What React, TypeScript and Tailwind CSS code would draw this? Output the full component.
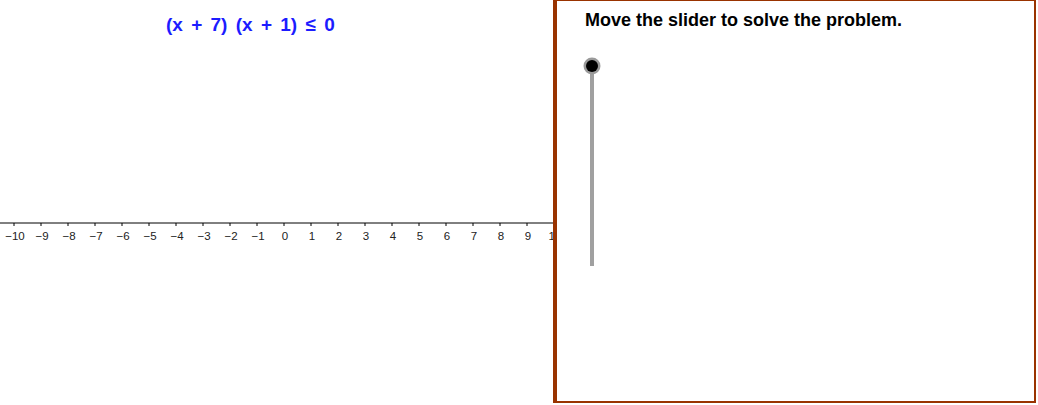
const ticks = Array.from({ length: 21 }, (_, i) => i - 10);

const NumberLine = () => (
  <svg width="553" height="40" viewBox="0 0 553 40" className="block">
    <line x1="0" y1="2" x2="553" y2="2" stroke="#000" strokeWidth="1" />
    {ticks.map((t) => {
      const x = 284 + t * 27;
      return (
        <g key={t}>
          <line x1={x} y1="2" x2={x} y2="5" stroke="#000" strokeWidth="1" />
          <text
            x={x + 1}
            y="19"
            fontSize="11.5"
            textAnchor="middle"
            fill="#222"
            fontFamily="'Liberation Sans', Arial, sans-serif"
          >
            {t < 0 ? `\u2212${-t}` : t}
          </text>
        </g>
      );
    })}
  </svg>
);

const App = () => {
  return (
    <div className="flex h-[405px] w-[1038px] overflow-hidden bg-white font-['Liberation_Sans',Arial,sans-serif]">
      <div className="w-[553px] shrink-0">
        <div className="pl-[166px] pt-[13px] text-[19px] leading-[24px] font-bold text-[#1c1cff] [word-spacing:3px]">
          (x + 7) (x + 1) ≤ 0
        </div>
        <div className="mt-[184px]">
          <NumberLine />
        </div>
      </div>

      <div className="h-[403px] w-[483px] shrink-0 border-t border-r-2 border-b-2 border-l-4 border-[#993300] bg-white">
        <div className="pt-[8px] pl-[28px] text-[18px] leading-[22px] font-bold text-black">
          Move the slider to solve the problem.
        </div>
        <div className="mt-[25px] ml-[25px]">
          <svg width="24" height="220" viewBox="0 0 24 220" className="block">
            <line x1="10" y1="10" x2="10" y2="210" stroke="#a0a0a0" strokeWidth="4" />
            <circle cx="10" cy="10" r="8.5" fill="#9a9a9a" />
            <circle cx="10" cy="10" r="6" fill="#000" />
          </svg>
        </div>
      </div>
    </div>
  );
};

export default App;
